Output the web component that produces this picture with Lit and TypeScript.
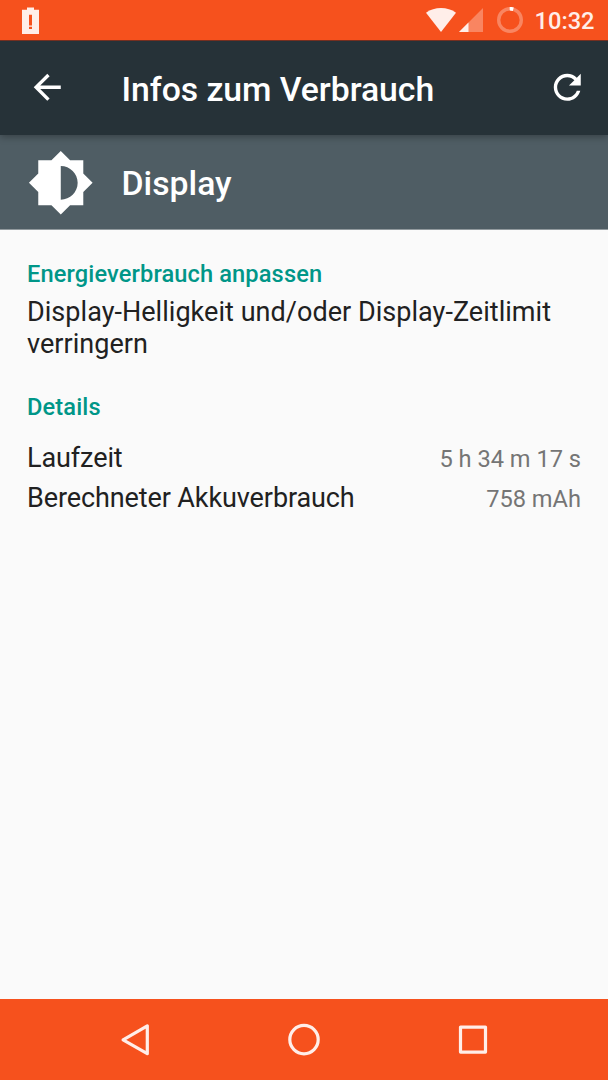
import { LitElement, html, css, svg } from "lit";
import { customElement } from "lit/decorators.js";

@customElement("status-bar")
class StatusBar extends LitElement {
  static styles = css`
    :host { display: flex; box-sizing: border-box; height: 40px; padding: 0 13.500px 0 22px; align-items: center; background: #f6511d; color: #ffeee9; position: relative; z-index: 2; }
    svg { display: block; flex: none; }
    .space { flex: 1; }
    .wifi { margin-right: 3px; }
    .signal { margin-right: 14px; }
    .ring { margin-right: 12px; }
    .time { font: 500 23.64px/28px Roboto, sans-serif; margin-top: 2px; }
  `;
  render() {
    return html`
      <svg width="17" height="27" viewBox="0 0 17 27" fill="currentColor"><path fill-rule="evenodd" d="M5 .500h7v2.200h5V26.900H0V2.700h5zM7 7.800v10.700h3V7.800zM7 19.800v2.200h3v-2.200z"/></svg>
      <span class="space"></span>
      <svg class="wifi" width="30" height="24" viewBox="0 0 30 24"><path fill="currentColor" d="M15 24 0 4.700C4.400 1.500 9.500 0 15 0s10.600 1.500 15 4.700z"/></svg>
      <svg class="signal" width="24" height="24" viewBox="0 0 24 24"><path fill="#fff" opacity=".3" d="M24 0v24H0z"/><path fill="currentColor" d="M9.500 14.500V24H0z"/></svg>
      <svg class="ring" width="26" height="26" viewBox="0 0 26 26" fill="none"><circle cx="13" cy="13" r="11.300" stroke="#fff" stroke-opacity=".3" stroke-width="3.400"/><path d="M12.700 1.700a11.300 11.300 0 0 1 3.600.5" stroke="#fff" stroke-width="3.600"/></svg>
      <span class="time">10:32</span>
    `;
  }
}

@customElement("app-bar")
class AppBar extends LitElement {
  static styles = css`
    :host { display: flex; box-sizing: border-box; height: 95px; padding: 0 20.500px 0 27px; align-items: center; background: #263238; color: #fff; border-top: 1px solid #752f20; position: relative; z-index: 1; box-shadow: 0 2px 7px rgba(0, 0, 0, .3); }
    svg { display: block; flex: none; margin-top: -1px; }
    .title { flex: 1; margin-left: 54px; margin-top: 3px; font: 500 33.78px/40px Roboto, sans-serif; letter-spacing: -.05px; }
  `;
  render() {
    return html`
      <svg width="40.530" height="40.530" viewBox="0 0 24 24" fill="currentColor"><path d="M20 11H7.830l5.590-5.590L12 4l-8 8 8 8 1.410-1.410L7.830 13H20v-2z"/></svg>
      <span class="title">Infos zum Verbrauch</span>
      <svg width="40.530" height="40.530" viewBox="0 0 24 24" fill="currentColor"><path d="M17.650 6.350C16.200 4.900 14.210 4 12 4c-4.420 0-7.990 3.580-7.990 8s3.570 8 7.990 8c3.730 0 6.840-2.550 7.730-6h-2.080c-.82 2.330-3.040 4-5.650 4-3.310 0-6-2.690-6-6s2.690-6 6-6c1.660 0 3.140.69 4.220 1.780L13 11h7V4l-2.350 2.350z"/></svg>
    `;
  }
}

@customElement("usage-header")
class UsageHeader extends LitElement {
  static styles = css`
    :host { display: flex; box-sizing: border-box; height: 95px; padding: 0 27px; align-items: center; background: #4f5d64; color: #fff; border-bottom: 1px solid #929a9e; }
    svg { display: block; flex: none; margin-top: 1px; }
    .title { margin-left: 27px; margin-top: 3px; font: 500 33.78px/40px Roboto, sans-serif; }
  `;
  render() {
    return html`
      <svg width="67.550" height="67.550" viewBox="0 0 24 24" fill="currentColor"><path d="M20 15.310L23.310 12 20 8.690V4h-4.690L12 .690 8.690 4H4v4.690L.690 12 4 15.310V20h4.690L12 23.310 15.310 20H20v-4.690zM12 18V6c3.310 0 6 2.690 6 6s-2.690 6-6 6z"/></svg>
      <span class="title">Display</span>
    `;
  }
}

@customElement("nav-bar")
class NavBar extends LitElement {
  static styles = css`
    :host { display: flex; justify-content: center; height: 81px; background: #f6511d; color: #ffeee9; }
    .key { display: flex; width: 169px; align-items: center; justify-content: center; }
    svg { display: block; }
  `;
  render() {
    const shapes = [
      svg`<path d="M32.300 5.900V33.700L8.100 19.800z"/>`,
      svg`<circle cx="20" cy="19.600" r="14.200"/>`,
      svg`<rect x="7.500" y="7.100" width="25" height="25"/>`,
    ];
    return html`${shapes.map((s) => html`<div class="key"><svg width="40" height="40" viewBox="0 0 40 40" fill="none" stroke="currentColor" stroke-width="3.200" stroke-linejoin="round">${s}</svg></div>`)}`;
  }
}

@customElement("app-root")
class AppRoot extends LitElement {
  static styles = css`
    :host { display: flex; flex-direction: column; height: 1080px; background: #fafafa; font-family: Roboto, sans-serif; color: #212121; }
    main { flex: 1; padding: 30px 27px 0; }
    h2 { margin: 0; font-size: 23.640px; line-height: 28px; font-weight: 500; letter-spacing: .12px; color: #009688; }
    p { margin: 8px 0 33px; font-size: 27.020px; line-height: 32px; letter-spacing: .03px; }
    .row { display: flex; justify-content: space-between; align-items: baseline; height: 40px; font-size: 27.020px; line-height: 32px; }
    .rows { margin-top: 21px; }
    .label { letter-spacing: -.11px; }
    .value { font-size: 23.640px; color: #757575; }
  `;
  rows = [
    ["Laufzeit", "5 h 34 m 17 s"],
    ["Berechneter Akkuverbrauch", "758 mAh"],
  ];
  render() {
    return html`
      <status-bar></status-bar>
      <app-bar></app-bar>
      <usage-header></usage-header>
      <main>
        <h2>Energieverbrauch anpassen</h2>
        <p>Display-Helligkeit und/oder Display-Zeitlimit verringern</p>
        <h2>Details</h2>
        <div class="rows">
          ${this.rows.map(([k, v]) => html`<div class="row"><span class="label">${k}</span><span class="value">${v}</span></div>`)}
        </div>
      </main>
      <nav-bar></nav-bar>
    `;
  }
}
